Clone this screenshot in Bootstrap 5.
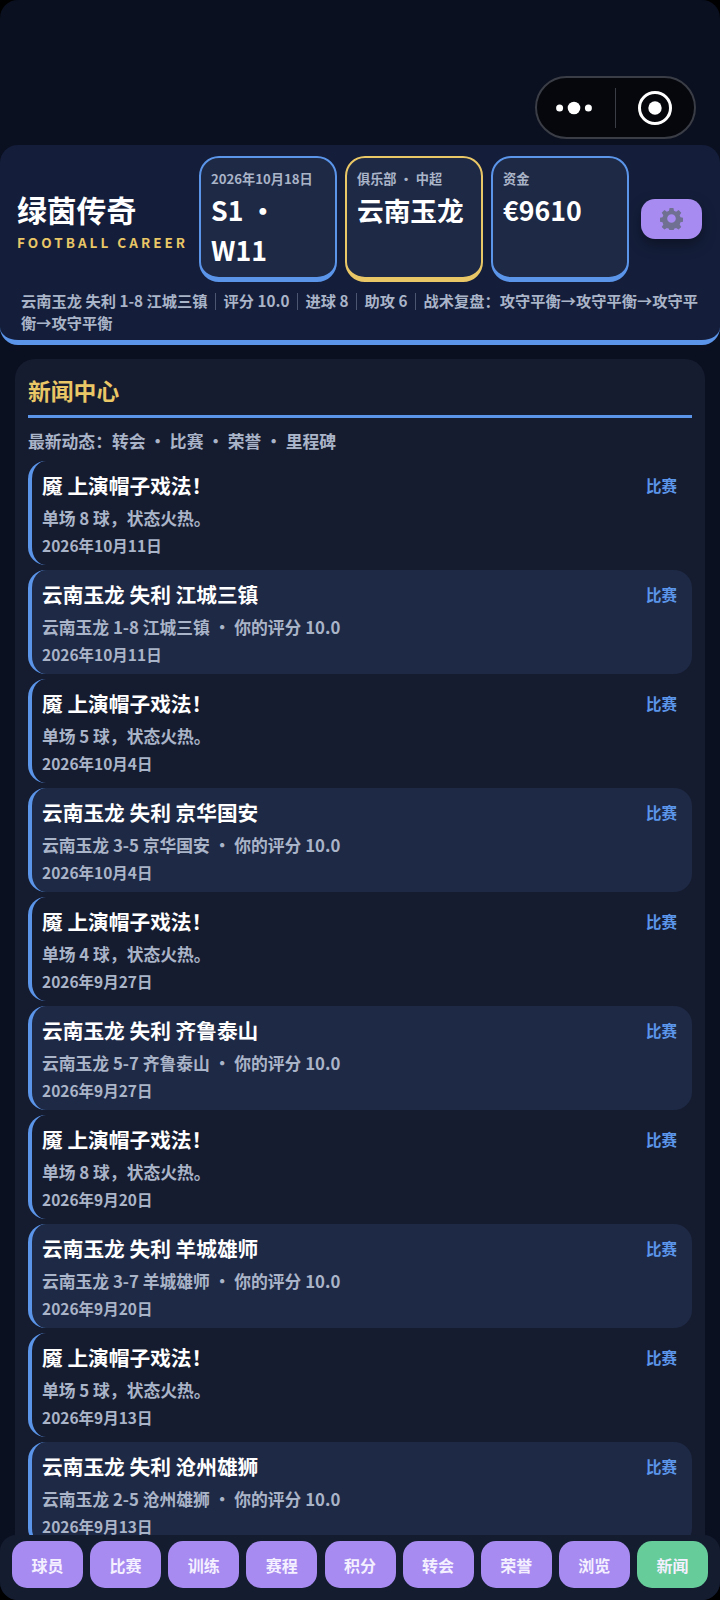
<!DOCTYPE html>
<html lang="zh">
<head>
  <meta charset="UTF-8">
  <meta name="viewport" content="width=device-width, initial-scale=1">
  <title>绿茵传奇</title>
  <link href="https://cdn.jsdelivr.net/npm/bootstrap@5.3.0/dist/css/bootstrap.min.css" rel="stylesheet">
  <style>
      html, body {
          height: 1600px;
          overflow: hidden;
          background: #000;
      }
      body {
          font-family: "Noto Sans CJK SC", "Noto Sans", sans-serif;
          font-weight: 700;
      }
      .app-frame {
          height: 1600px;
          overflow: hidden;
          position: relative;
          border-radius: 18px;
          background: #0b1020;
          padding-top: 145px;
      }
      .wx-capsule {
          position: absolute;
          top: 76px;
          left: 535px;
          width: 161px;
          height: 63px;
          border: 2px solid #3a3d45;
          border-radius: 32px;
          background: #05070d;
      }
      .wx-capsule .wx-sep {
          width: 1px;
          height: 40px;
          background: #3a3d45;
      }
      .wx-capsule .wx-side {
          width: 78px;
      }
      .wx-capsule .wx-side.dots {
          padding-right: 4px;
      }
      .top-head {
          height: 200px;
          background: #141e3a;
          border-radius: 18px;
          border-bottom: 5px solid #5b95ea;
          padding: 11px 0 0 17px;
      }
      .brand-box {
          width: 182px;
      }
      .brand-name {
          font-size: 29.8px;
          line-height: 38px;
          color: #fff;
          margin-top: 3px;
      }
      .brand-sub {
          font-size: 13.5px;
          line-height: 18px;
          letter-spacing: 3.03px;
          color: #eac766;
          margin: 5px 0 1px;
          white-space: nowrap;
      }
      .stat-box {
          width: 138px;
          height: 126px;
          background: #1e2945;
          border: 2px solid #5b95ea;
          border-bottom-width: 5px;
          border-radius: 20px;
          padding: 11px 10px;
      }
      .stat-box.gold {
          border-color: #eac766;
      }
      .stat-label {
          font-size: 13.2px;
          line-height: 20px;
          color: #aab4c8;
          white-space: nowrap;
      }
      .stat-value {
          font-size: 26.7px;
          line-height: 39.5px;
          margin-top: 1px;
          color: #fff;
      }
      .gear-btn {
          width: 61px;
          height: 40px;
          margin-left: 12px;
          margin-top: -1px;
          background: #a78bf0;
          border-radius: 14px;
          box-shadow: 0 6px 14px rgba(0, 0, 0, .35);
      }
      .recap {
          font-size: 15.25px;
          line-height: 22px;
          color: #aab4c8;
          padding: 0 14px 0 4px;
          margin-top: 7px;
      }
      .recap i {
          display: inline-block;
          width: 1px;
          height: 17px;
          background: #4c5670;
          margin: 0 7.5px;
          vertical-align: -3px;
      }
      .news-panel {
          margin: 14px 15px 0;
          padding: 16px 13px 14px;
          background: #161c2f;
          border-radius: 20px;
          height: 1400px;
      }
      .news-title {
          font-size: 22.8px;
          line-height: 32px;
          color: #eac766;
          padding-bottom: 8px;
          border-bottom: 3px solid #5b95ea;
      }
      .news-filter {
          font-size: 16.8px;
          line-height: 24px;
          color: #aab4c8;
          margin: 11px 0 8px;
      }
      .news-item {
          height: 104px;
          margin-bottom: 5px;
          padding: 8px 15px 0 10px;
          border-left: 4px solid #5b95ea;
          border-radius: 18px;
      }
      .news-item.alt {
          background: #1e2945;
      }
      .news-head {
          font-size: 20.7px;
          line-height: 32px;
          color: #fff;
      }
      .news-tag {
          font-size: 15.5px;
          line-height: 32px;
          color: #5b95ea;
      }
      .news-sub, .news-date {
          font-size: 16.8px;
          line-height: 24px;
          color: #aab4c8;
          margin-top: 5px;
      }
      .news-date {
          font-size: 15.5px;
          margin-top: 3px;
      }
      .bottom-bar {
          position: absolute;
          left: 0;
          right: 0;
          bottom: 0;
          height: 65px;
          padding: 6px 12px 0;
          background: #141c30;
          border-radius: 16px 16px 0 0;
      }
      .bar-btn {
          width: 71px;
          height: 47px;
          border-radius: 15px;
          background: #a78bf0;
          color: #f4f0ff;
          font-size: 16px;
      }
      .bar-btn.current {
          background: #66cc99;
      }
  </style>
</head>
<body>
  <div class="app-frame">

    <div class="wx-capsule d-flex align-items-center">
      <div class="wx-side dots d-flex align-items-center justify-content-center">
        <svg width="36" height="14" viewBox="0 0 36 14"><circle cx="3.600" cy="7" r="3.500" fill="#fff"/><circle cx="18" cy="7" r="6.300" fill="#fff"/><circle cx="32.400" cy="7" r="3.500" fill="#fff"/></svg>
      </div>
      <div class="wx-sep"></div>
      <div class="wx-side d-flex align-items-center justify-content-center">
        <svg width="34" height="34" viewBox="0 0 34 34"><circle cx="17" cy="17" r="15.500" fill="none" stroke="#fff" stroke-width="3"/><circle cx="17" cy="17" r="6.700" fill="#fff"/></svg>
      </div>
    </div>

    <header class="top-head">
      <div class="d-flex align-items-center">
        <div class="brand-box">
          <div class="brand-name">绿茵传奇</div>
          <div class="brand-sub">FOOTBALL CAREER</div>
        </div>
        <div class="stat-box">
          <div class="stat-label">2026年10月18日</div>
          <div class="stat-value">S1 · W11</div>
        </div>
        <div class="stat-box gold ms-2">
          <div class="stat-label">俱乐部 · 中超</div>
          <div class="stat-value">云南玉龙</div>
        </div>
        <div class="stat-box ms-2">
          <div class="stat-label">资金</div>
          <div class="stat-value">€9610</div>
        </div>
        <div class="gear-btn d-flex align-items-center justify-content-center">
          <svg width="23" height="23" viewBox="0 0 24 24" fill="#6f7092">
            <path fill-rule="evenodd" d="M10 1h4l.6 3 2.2.9 2.6-1.700 2.800 2.800-1.700 2.600.9 2.200 3 .6v4l-3 .6-.9 2.200 1.700 2.600-2.800 2.800-2.600-1.700-2.200.9-.6 3h-4l-.6-3-2.200-.9-2.600 1.700-2.800-2.800 1.700-2.600-.9-2.200-3-.6v-4l3-.6.9-2.200-1.700-2.600 2.800-2.800 2.600 1.700 2.200-.9zM12 7.500a4.500 4.500 0 1 0 0 9 4.500 4.500 0 0 0 0-9z"/>
          </svg>
        </div>
      </div>
      <div class="recap">云南玉龙 失利 1-8 江城三镇<i></i>评分 10.0<i></i>进球 8<i></i>助攻 6<i></i>战术复盘：攻守平衡→攻守平衡→攻守平衡→攻守平衡</div>
    </header>

    <section class="news-panel">
      <div class="news-title">新闻中心</div>
      <div class="news-filter">最新动态：转会 · 比赛 · 荣誉 · 里程碑</div>
      <div id="news-list"></div>
    </section>

    <nav class="bottom-bar d-flex justify-content-between">
      <div class="bar-btn d-flex align-items-center justify-content-center">球员</div>
      <div class="bar-btn d-flex align-items-center justify-content-center">比赛</div>
      <div class="bar-btn d-flex align-items-center justify-content-center">训练</div>
      <div class="bar-btn d-flex align-items-center justify-content-center">赛程</div>
      <div class="bar-btn d-flex align-items-center justify-content-center">积分</div>
      <div class="bar-btn d-flex align-items-center justify-content-center">转会</div>
      <div class="bar-btn d-flex align-items-center justify-content-center">荣誉</div>
      <div class="bar-btn d-flex align-items-center justify-content-center">浏览</div>
      <div class="bar-btn current d-flex align-items-center justify-content-center">新闻</div>
    </nav>
  </div>

  <script src="https://cdn.jsdelivr.net/npm/bootstrap@5.3.0/dist/js/bootstrap.bundle.min.js"></script>
  <script>
      // [进球数, 日期, 对手, 比分]
      const weeks = [
          [8, '2026年10月11日', '江城三镇', '1-8'],
          [5, '2026年10月4日', '京华国安', '3-5'],
          [4, '2026年9月27日', '齐鲁泰山', '5-7'],
          [8, '2026年9月20日', '羊城雄师', '3-7'],
          [5, '2026年9月13日', '沧州雄狮', '2-5']
      ];
      const list = document.getElementById('news-list');

      function itemHtml(head, sub, date, alt) {
          return `<div class="news-item${alt ? ' alt' : ''}">
            <div class="d-flex justify-content-between">
              <div class="news-head">${head}</div>
              <div class="news-tag">比赛</div>
            </div>
            <div class="news-sub">${sub}</div>
            <div class="news-date">${date}</div>
          </div>`;
      }

      weeks.forEach(w => {
          list.innerHTML += itemHtml('魇 上演帽子戏法！', `单场 ${w[0]} 球，状态火热。`, w[1], false);
          list.innerHTML += itemHtml(`云南玉龙 失利 ${w[2]}`, `云南玉龙 ${w[3]} ${w[2]} · 你的评分 10.0`, w[1], true);
      });
  </script>
</body>
</html>
